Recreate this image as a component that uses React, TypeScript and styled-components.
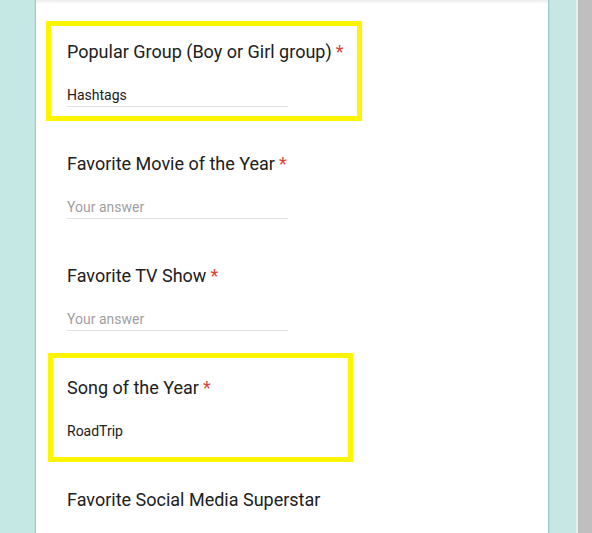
import styled, { createGlobalStyle } from "styled-components"

const GlobalStyle = createGlobalStyle`
	html, body {
		margin: 0;
		padding: 0;
		background: #ffffff;
	}
	body {
		font-family: Roboto, "Liberation Sans", sans-serif;
		overflow: hidden;
	}
`

const Page = styled.div`
	display: flex;
	width: 592px;
	height: 533px;
	background: #c5e8e5;
	overflow: hidden;
`

const Gutter = styled.div<{ $width: number }>`
	flex: 0 0 ${(props) => props.$width}px;
	background: #c5e8e5;
`

const Card = styled.main`
	flex: 0 0 512px;
	background: linear-gradient(#ececec, #ffffff 4px);
	box-shadow: 0 0 1px 1px rgba(60, 110, 105, 0.25);
	display: flex;
	flex-direction: column;
	position: relative;
	z-index: 1;
	overflow: hidden;
`

const Divider = styled.div`
	flex: 0 0 2px;
	background: #e9eeed;
`

const Scrollbar = styled.div`
	flex: 0 0 14px;
	background: #bfbfbf;
`

const Question = styled.section`
	position: relative;
	flex: 0 0 112px;
	box-sizing: border-box;
	padding: 40px 0 0 31px;
	display: flex;
	flex-direction: column;
	gap: 20px;
`

const Title = styled.h2`
	margin: 0;
	font-size: 18px;
	line-height: 24px;
	font-weight: 400;
	color: #202020;
	white-space: nowrap;
`

const Required = styled.span`
	color: #db4437;
	margin-left: 4px;
`

const Answer = styled.div<{ $empty?: boolean; $bare?: boolean }>`
	width: 221px;
	font-size: 14px;
	line-height: 20px;
	padding-top: 1px;
	padding-bottom: 1px;
	color: ${(props) => (props.$empty ? "#a0a0a0" : "#202020")};
	border-bottom: 1px solid ${(props) => (props.$bare ? "transparent" : "#e0e0e0")};
`

const Highlight = styled.span<{ $top: number; $left: number; $width: number; $height: number }>`
	position: absolute;
	top: ${(props) => props.$top}px;
	left: ${(props) => props.$left}px;
	width: ${(props) => props.$width}px;
	height: ${(props) => props.$height}px;
	box-sizing: border-box;
	border: 5px solid #fff500;
	pointer-events: none;
	z-index: 2;
`

type Box = { top: number; left: number; width: number; height: number }

type Item = {
	title: string
	required: boolean
	value?: string
	bare?: boolean
	// the last question runs past the bottom of the view
	cut?: boolean
	box?: Box
}

const items: Item[] = [
	{
		title: "Popular Group (Boy or Girl group)",
		required: true,
		value: "Hashtags",
		box: { top: 21, left: 10, width: 316, height: 100 },
	},
	{ title: "Favorite Movie of the Year", required: true },
	{ title: "Favorite TV Show", required: true },
	{
		title: "Song of the Year",
		required: true,
		value: "RoadTrip",
		bare: true,
		box: { top: 17, left: 12, width: 305, height: 109 },
	},
	{ title: "Favorite Social Media Superstar", required: false, cut: true },
]

export default function App() {
	return (
		<>
			<GlobalStyle />
			<Page>
				<Gutter $width={36} />
				<Card>
					{items.map((item) => (
						<Question key={item.title}>
							<Title>
								{item.title}
								{item.required && <Required>*</Required>}
							</Title>
							{!item.cut && (
								<Answer $empty={!item.value} $bare={item.bare}>
									{item.value ?? "Your answer"}
								</Answer>
							)}
							{item.box && (
								<Highlight
									$top={item.box.top}
									$left={item.box.left}
									$width={item.box.width}
									$height={item.box.height}
								/>
							)}
						</Question>
					))}
				</Card>
				<Gutter $width={28} />
				<Divider />
				<Scrollbar />
			</Page>
		</>
	)
}
